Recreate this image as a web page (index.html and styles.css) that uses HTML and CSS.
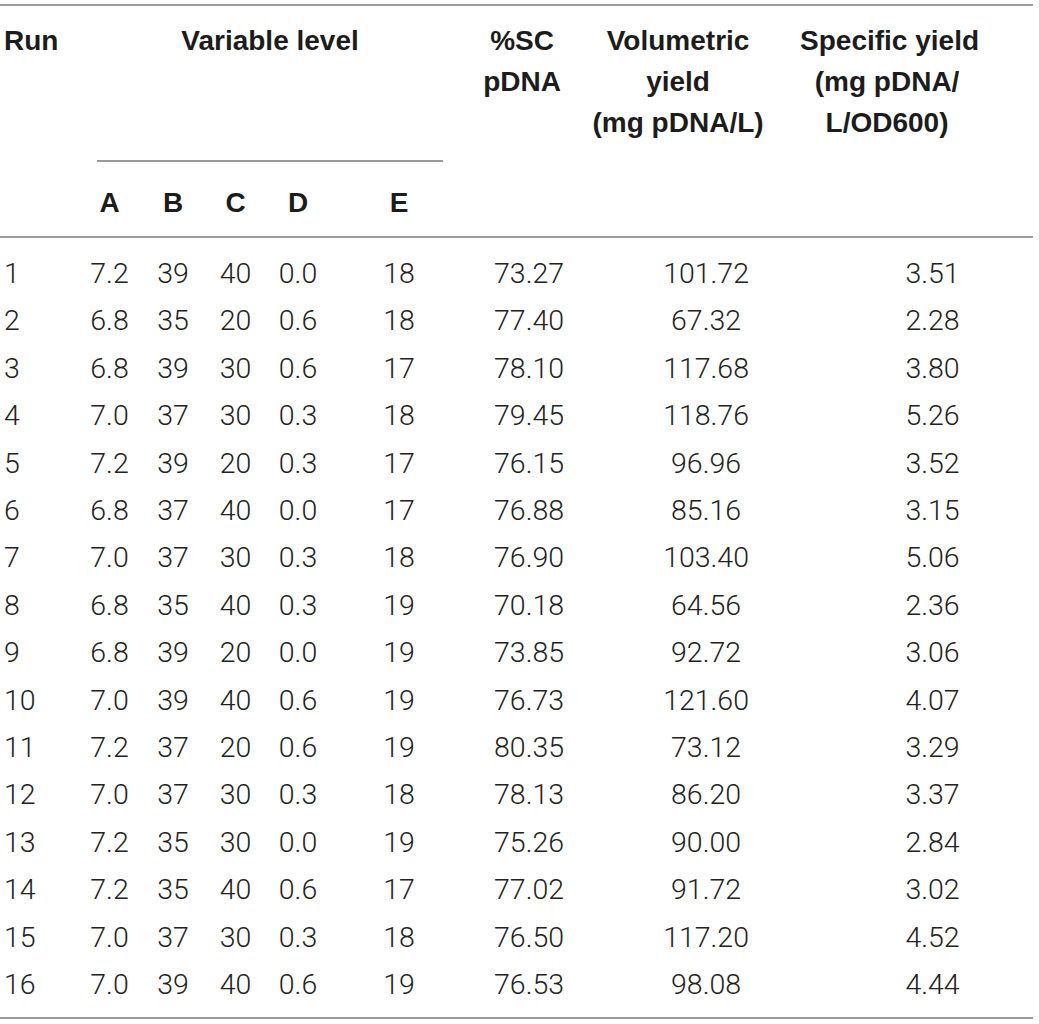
FILE: index.html
```html
<!DOCTYPE html>
<html lang="en">
<head>
    <meta charset="UTF-8">
    <meta name="viewport" content="width=device-width, initial-scale=1.0">
    <title>Design runs</title>
    <link rel="stylesheet" href="styles.css">
</head>
<body>
    <table class="runs">
        <colgroup>
            <col class="w-run">
            <col class="w-a">
            <col class="w-b">
            <col class="w-c">
            <col class="w-d">
            <col class="w-e">
            <col class="w-sc">
            <col class="w-vol">
            <col class="w-spec">
        </colgroup>
        <thead>
            <tr>
                <th rowspan="2" class="h-run">Run</th>
                <th colspan="5" class="h-level"><div class="level-label">Variable level</div></th>
                <th rowspan="2" class="h-sc">%SC<br>pDNA</th>
                <th rowspan="2" class="h-vol">Volumetric<br>yield<br>(mg pDNA/L)</th>
                <th rowspan="2" class="h-spec">Specific yield<br>(mg pDNA/<br>L/OD600)</th>
            </tr>
            <tr class="letters">
                <th>A</th>
                <th>B</th>
                <th>C</th>
                <th>D</th>
                <th>E</th>
            </tr>
        </thead>
        <tbody>
            <tr><td>1</td><td>7.2</td><td>39</td><td>40</td><td>0.0</td><td>18</td><td>73.27</td><td>101.72</td><td>3.51</td></tr>
            <tr><td>2</td><td>6.8</td><td>35</td><td>20</td><td>0.6</td><td>18</td><td>77.40</td><td>67.32</td><td>2.28</td></tr>
            <tr><td>3</td><td>6.8</td><td>39</td><td>30</td><td>0.6</td><td>17</td><td>78.10</td><td>117.68</td><td>3.80</td></tr>
            <tr><td>4</td><td>7.0</td><td>37</td><td>30</td><td>0.3</td><td>18</td><td>79.45</td><td>118.76</td><td>5.26</td></tr>
            <tr><td>5</td><td>7.2</td><td>39</td><td>20</td><td>0.3</td><td>17</td><td>76.15</td><td>96.96</td><td>3.52</td></tr>
            <tr><td>6</td><td>6.8</td><td>37</td><td>40</td><td>0.0</td><td>17</td><td>76.88</td><td>85.16</td><td>3.15</td></tr>
            <tr><td>7</td><td>7.0</td><td>37</td><td>30</td><td>0.3</td><td>18</td><td>76.90</td><td>103.40</td><td>5.06</td></tr>
            <tr><td>8</td><td>6.8</td><td>35</td><td>40</td><td>0.3</td><td>19</td><td>70.18</td><td>64.56</td><td>2.36</td></tr>
            <tr><td>9</td><td>6.8</td><td>39</td><td>20</td><td>0.0</td><td>19</td><td>73.85</td><td>92.72</td><td>3.06</td></tr>
            <tr><td>10</td><td>7.0</td><td>39</td><td>40</td><td>0.6</td><td>19</td><td>76.73</td><td>121.60</td><td>4.07</td></tr>
            <tr><td>11</td><td>7.2</td><td>37</td><td>20</td><td>0.6</td><td>19</td><td>80.35</td><td>73.12</td><td>3.29</td></tr>
            <tr><td>12</td><td>7.0</td><td>37</td><td>30</td><td>0.3</td><td>18</td><td>78.13</td><td>86.20</td><td>3.37</td></tr>
            <tr><td>13</td><td>7.2</td><td>35</td><td>30</td><td>0.0</td><td>19</td><td>75.26</td><td>90.00</td><td>2.84</td></tr>
            <tr><td>14</td><td>7.2</td><td>35</td><td>40</td><td>0.6</td><td>17</td><td>77.02</td><td>91.72</td><td>3.02</td></tr>
            <tr><td>15</td><td>7.0</td><td>37</td><td>30</td><td>0.3</td><td>18</td><td>76.50</td><td>117.20</td><td>4.52</td></tr>
            <tr><td>16</td><td>7.0</td><td>39</td><td>40</td><td>0.6</td><td>19</td><td>76.53</td><td>98.08</td><td>4.44</td></tr>
        </tbody>
    </table>
</body>
</html>
```

FILE: styles.css
```css
body {
    margin: 0;
    padding: 0;
    background-color: #fff;
    font-family: 'Liberation Sans', Arial, sans-serif;
}

.runs {
    width: 1033px;
    margin-top: 4px;
    table-layout: fixed;
    border-collapse: separate;
    border-spacing: 0;
    border-top: 2px solid #9a9a9a;
    border-bottom: 2px solid #9a9a9a;
    font-size: 28px;
}

.w-run { width: 78px; }
.w-a { width: 63px; }
.w-b { width: 64px; }
.w-c { width: 61px; }
.w-d { width: 64px; }
.w-e { width: 138px; }
.w-sc { width: 112px; }
.w-vol { width: 220px; }
.w-spec { width: 233px; }

/* header */
.runs th {
    font-weight: bold;
    color: #1c1c1c;
    line-height: 41px;
    text-align: center;
    vertical-align: top;
    padding: 0;
    white-space: nowrap;
}

.runs thead tr:first-child th {
    padding-top: 14px;
}

.runs th[rowspan] {
    border-bottom: 2px solid #9a9a9a;
}

.h-run {
    text-align: left !important;
    padding-left: 4px !important;
}

.h-sc { padding-right: 4px !important; }
.h-vol { padding-right: 24px !important; }
.h-spec { padding-right: 59px !important; }

.h-level {
    padding: 14px 25px 0 19px !important;
}

.level-label {
    padding-bottom: 99px;
    border-bottom: 2px solid #9a9a9a;
}

.letters th {
    padding: 20px 0 13px;
    border-bottom: 2px solid #9a9a9a;
}

/* body */
.runs td {
    font-family: Roboto, 'Liberation Sans', sans-serif;
    font-weight: 300;
    font-size: 28.5px;
    color: #222;
    line-height: 47.4px;
    text-align: center;
    padding: 0;
}

.runs td:nth-child(1) {
    text-align: left;
    padding-left: 4px;
}

.runs td:nth-child(7) { padding-left: 10px; }
.runs td:nth-child(8) { padding-left: 32px; }
.runs td:nth-child(9) { padding-left: 32px; }

.runs tbody tr:first-child td {
    padding-top: 12px;
}

.runs tbody tr:last-child td {
    padding-bottom: 8px;
}
```
